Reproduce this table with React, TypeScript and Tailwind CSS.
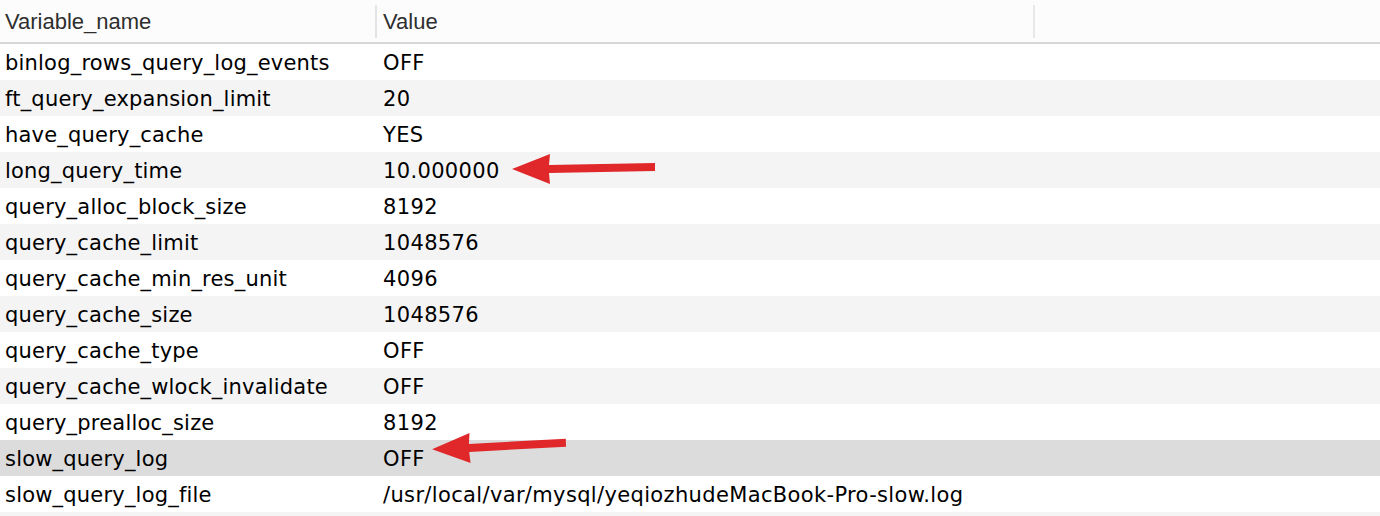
import React from 'react';

const rows: [string, string][] = [
  ['binlog_rows_query_log_events', 'OFF'],
  ['ft_query_expansion_limit', '20'],
  ['have_query_cache', 'YES'],
  ['long_query_time', '10.000000'],
  ['query_alloc_block_size', '8192'],
  ['query_cache_limit', '1048576'],
  ['query_cache_min_res_unit', '4096'],
  ['query_cache_size', '1048576'],
  ['query_cache_type', 'OFF'],
  ['query_cache_wlock_invalidate', 'OFF'],
  ['query_prealloc_size', '8192'],
  ['slow_query_log', 'OFF'],
  ['slow_query_log_file', '/usr/local/var/mysql/yeqiozhudeMacBook-Pro-slow.log']
];

// red annotation arrow pointing left
const Arrow = ({ className, len }: { className: string; len: number }) => (
  <svg className={className} width={len + 3} height="36" viewBox={`0 0 ${len + 3} 36`}>
    <path
      d={`M4 19 L42 4 L41 15 L${len} 13 L${len} 21 L41 23 L42 34 Z`}
      fill="#e0282a"
    />
  </svg>
);

const App = () => {
  return (
    <div className="w-[1380px] h-[516px] overflow-hidden bg-white font-['DejaVu_Sans',sans-serif] text-[21px] tracking-[0.35px] text-black">
      <div className="flex h-[44px] items-center bg-[#fcfcfc] border-b-2 border-[#d6d6d6] font-['Liberation_Sans',sans-serif] text-[22px] tracking-normal text-[#2e2e2e]">
        <div className="w-[375px] pl-[5px]">Variable_name</div>
        <div className="w-[658px] flex items-center">
          <div className="h-[33px] border-l-2 border-[#e4e4e4]" />
          <span className="pl-[6px]">Value</span>
        </div>
        <div className="h-[33px] border-l-2 border-[#e8e8e8]" />
      </div>
      {rows.map(([name, value], i) => (
        <div
          key={name}
          className={`relative flex h-[36px] items-center pt-[3px] ${
            name === 'slow_query_log'
              ? 'bg-[#dcdcdc]'
              : i % 2 === 1
              ? 'bg-[#f4f4f4]'
              : 'bg-white'
          }`}
        >
          <div className="w-[375px] pl-[5px] tracking-[0.2px]">{name}</div>
          <div className="pl-[8px]">{value}</div>
          {name === 'long_query_time' && (
            <Arrow len={147} className="absolute left-[508px] top-[-2px]" />
          )}
          {name === 'slow_query_log' && (
            <Arrow len={138} className="absolute left-[428px] top-[-12px] -rotate-[2deg]" />
          )}
        </div>
      ))}
      <div className="h-[36px] bg-[#f4f4f4]" />
    </div>
  );
};

export default App;
